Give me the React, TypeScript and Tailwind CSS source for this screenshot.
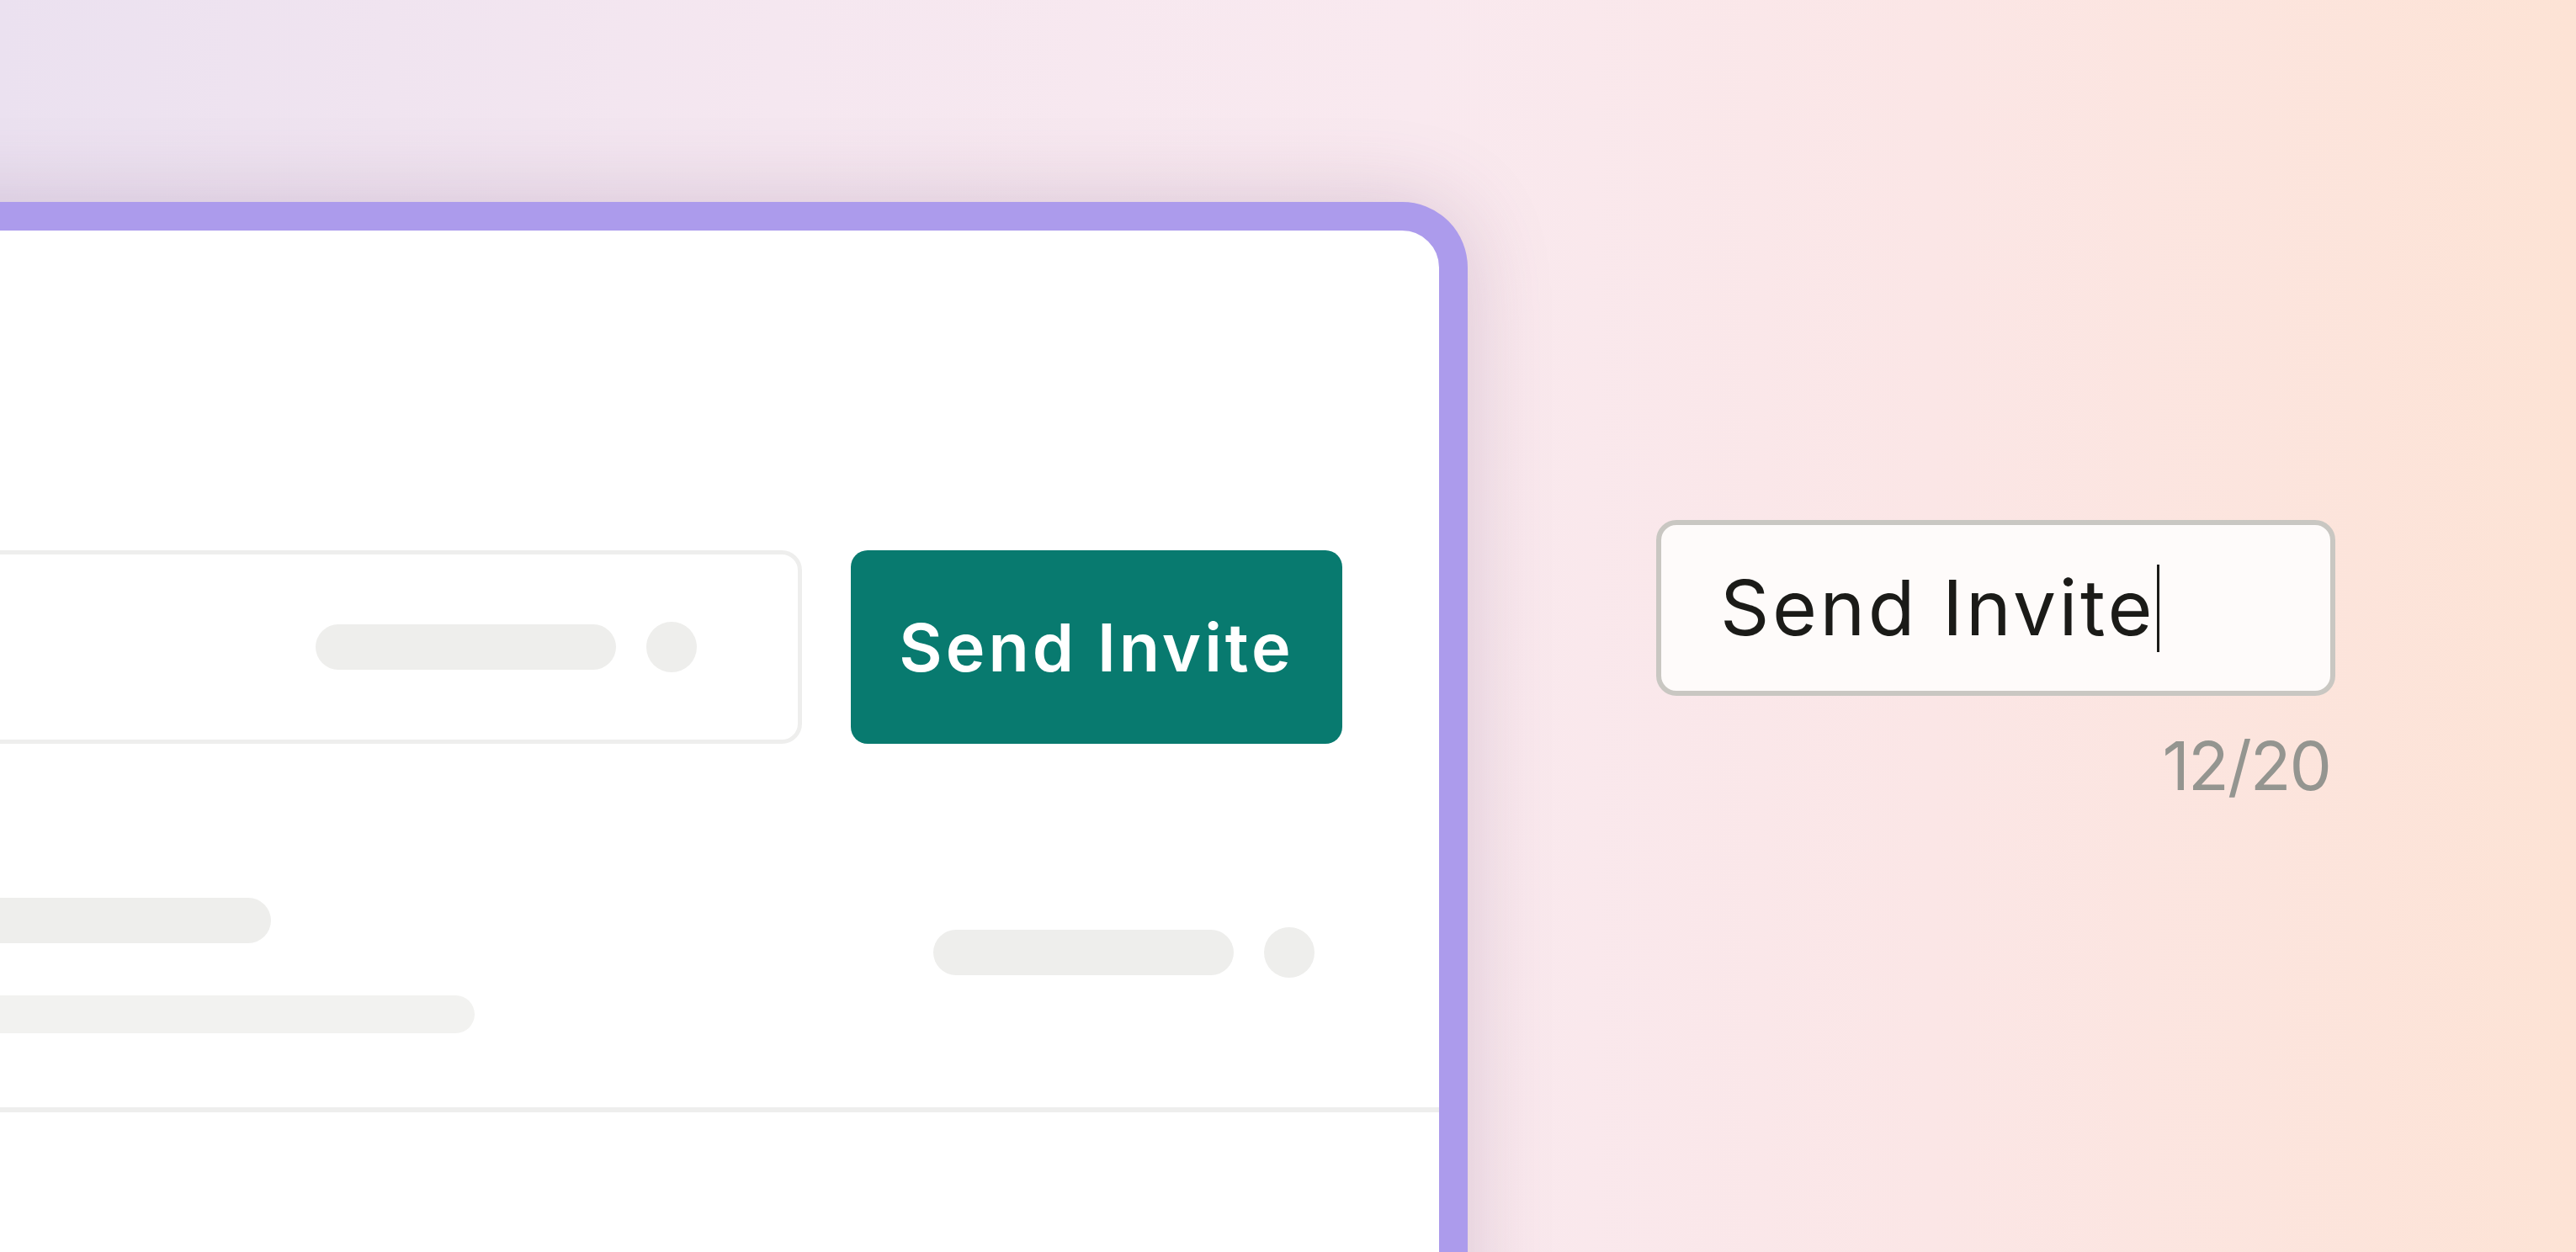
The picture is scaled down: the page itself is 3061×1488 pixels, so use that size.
import React from 'react';

const Pill = ({ className }: { className: string }) => <div className={`rounded-full ${className}`} />;

const App = () => {
    return (
        <div
            className="flex h-[1488px] w-[3061px] overflow-hidden bg-[linear-gradient(to_right,#ebe1f0_0%,#f5e7f0_30%,#f9e9ef_55%,#fbe6e6_75%,#fde3d5_100%)]"
            style={{ fontFamily: 'Inter, "Liberation Sans", sans-serif' }}
        >
            {/* app window, cut off on the left and bottom */}
            <div className="-ml-[200px] mt-[240px] h-[1400px] w-[1944px] shrink-0 rounded-[78px] border-[34px] border-[#ac9bec] bg-white shadow-[0_0_100px_rgba(110,70,120,0.22)]">
                <div className="flex flex-col pl-[100px] pt-[380px] pr-[115px]">
                    <div className="flex h-[230px] items-stretch gap-[58px]">
                        <div className="flex flex-1 items-center justify-end gap-[36px] rounded-[24px] border-[5px] border-[#eeeeed] pr-[120px]">
                            <Pill className="h-[54px] w-[357px] bg-[#eeeeec]" />
                            <Pill className="h-[60px] w-[60px] bg-[#eeeeec]" />
                        </div>
                        <button className="flex w-[584px] items-center justify-center rounded-[20px] bg-[#087a6f] text-[79px] font-semibold tracking-[4px] text-white">
                            Send Invite
                        </button>
                    </div>

                    <div className="mt-[183px] flex items-start justify-between pr-[33px]">
                        <div className="flex flex-col gap-[62px]">
                            <Pill className="h-[54px] w-[388px] bg-[#eeeeec]" />
                            <Pill className="h-[45px] w-[630px] bg-[#f2f2f0]" />
                        </div>
                        <div className="mt-[35px] flex items-center gap-[36px]">
                            <Pill className="h-[54px] w-[357px] bg-[#eeeeec]" />
                            <Pill className="h-[60px] w-[60px] bg-[#eeeeec]" />
                        </div>
                    </div>
                </div>
                <div className="mt-[88px] h-[6px] w-full bg-[#eeeeed]" />
            </div>

            {/* standalone field */}
            <div className="ml-[224px] mt-[618px] flex w-[807px] shrink-0 flex-col">
                <div className="flex h-[209px] items-center rounded-[24px] border-[6px] border-[#c9c7c2] bg-[#fefbfa] pl-[70px]">
                    <span className="text-[91px] leading-none tracking-[3.5px] text-[#1b1b18]">Send Invite</span>
                    <span className="ml-[2px] inline-block h-[104px] w-[3px] bg-[#1b1b18]" />
                </div>
                <div className="mt-[43px] self-end pr-[6px] text-[80px] leading-none tracking-[-2px] text-[#949590]">12/20</div>
            </div>
        </div>
    );
};

export default App;
